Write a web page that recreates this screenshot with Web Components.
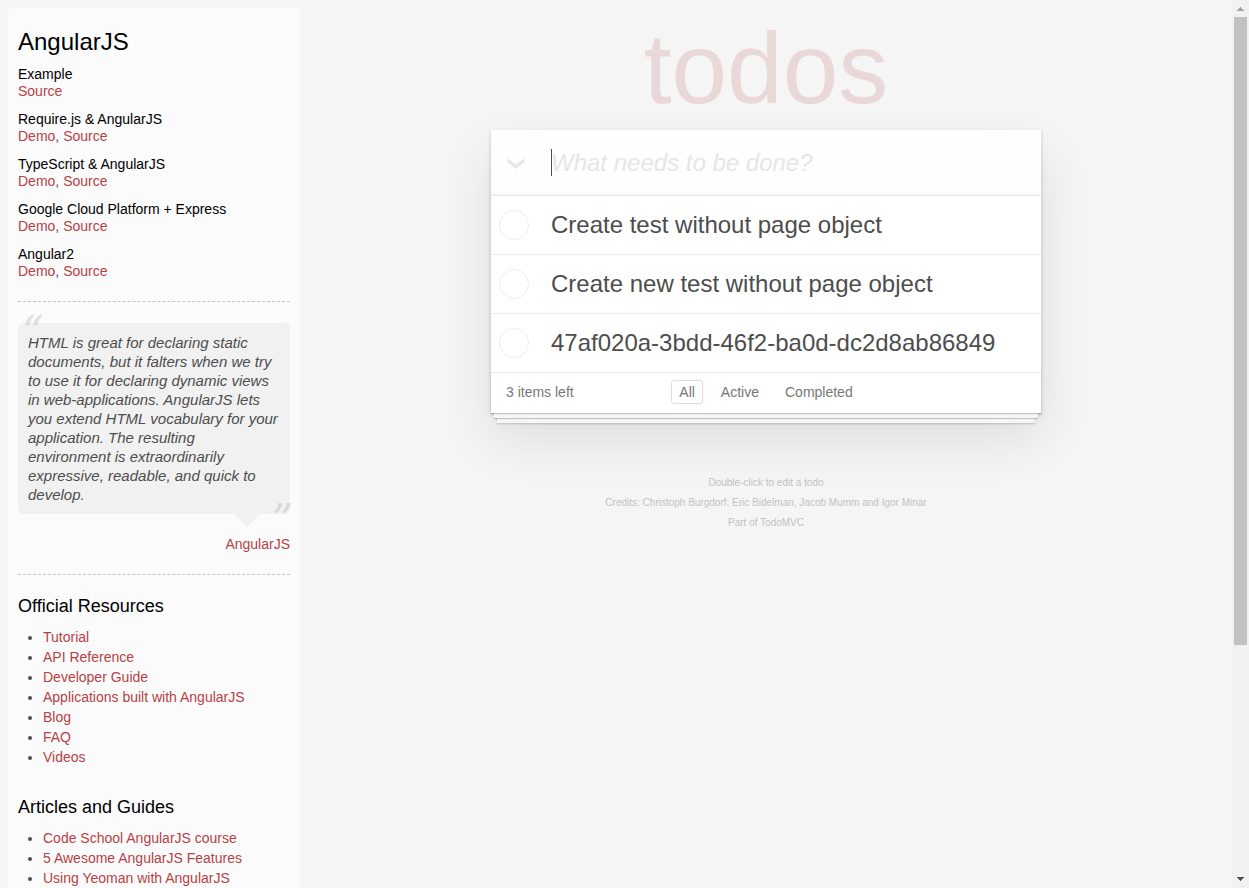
<!DOCTYPE html>
<html lang="en">
<head>
<meta charset="utf-8">
<title>AngularJS • TodoMVC</title>
<style>
html, body { margin: 0; height: 100%; }
body { background: #f5f5f5; color: #4d4d4d; font: 14px/20px "Liberation Sans", Arial, sans-serif; overflow: hidden; }
</style>
</head>
<body>
<todo-shell>
  <learn-bar slot="aside" heading="AngularJS">
    <demo-links heading="Example"><a href="#source">Source</a></demo-links>
    <demo-links heading="Require.js &amp; AngularJS"><a href="#demo">Demo</a>, <a href="#source">Source</a></demo-links>
    <demo-links heading="TypeScript &amp; AngularJS"><a href="#demo">Demo</a>, <a href="#source">Source</a></demo-links>
    <demo-links heading="Google Cloud Platform + Express"><a href="#demo">Demo</a>, <a href="#source">Source</a></demo-links>
    <demo-links heading="Angular2"><a href="#demo">Demo</a>, <a href="#source">Source</a></demo-links>
    <speech-quote slot="quote">HTML is great for declaring static documents, but it falters when we try to use it for declaring dynamic views in web-applications. AngularJS lets you extend HTML vocabulary for your application. The resulting environment is extraordinarily expressive, readable, and quick to develop.<a slot="by" href="#angularjs">AngularJS</a></speech-quote>
    <link-list slot="lists" heading="Official Resources" items="Tutorial|API Reference|Developer Guide|Applications built with AngularJS|Blog|FAQ|Videos"></link-list>
    <link-list slot="lists" heading="Articles and Guides" items="Code School AngularJS course|5 Awesome AngularJS Features|Using Yeoman with AngularJS"></link-list>
  </learn-bar>
  <todo-app>
    <todo-item>Create test without page object</todo-item>
    <todo-item>Create new test without page object</todo-item>
    <todo-item>47af020a-3bdd-46f2-ba0d-dc2d8ab86849</todo-item>
    <todo-filters slot="footer">3 items left</todo-filters>
  </todo-app>
  <page-info></page-info>
  <scroll-rail slot="rail"></scroll-rail>
</todo-shell>

<script>
const define = (name, html, setup) => customElements.define(name, class extends HTMLElement {
  constructor() {
    super();
    this.attachShadow({ mode: 'open' }).innerHTML = html;
  }
  connectedCallback() { if (setup) setup(this, this.shadowRoot); }
});

const setHeading = (host, root) => { root.querySelector('.heading').textContent = host.getAttribute('heading'); };

define('todo-shell', `
<style>
:host { display: grid; grid-template-columns: 300px minmax(0, 1fr) 17px; height: 100vh; overflow: hidden; }
.aside { padding: 8px 0 0 8px; display: flex; }
main { min-width: 0; }
</style>
<div class="aside"><slot name="aside"></slot></div>
<main><slot></slot></main>
<slot name="rail"></slot>`);

define('learn-bar', `
<style>
:host { display: block; flex: 1; box-sizing: border-box; padding: 19px 10px 0; background: rgba(255,255,255,.6); border-radius: 5px 5px 0 0; }
h3 { margin: 0 0 10px; font-size: 24px; line-height: 29px; font-weight: 500; color: #000; }
.demos { display: grid; gap: 11px; }
hr { margin: 20px 0; border: 0; border-top: 1px dashed #c5c5c5; }
hr.upper { margin: 21px 0; }
.lists { display: grid; gap: 29px; }
</style>
<h3 class="heading"></h3>
<div class="demos"><slot></slot></div>
<hr class="upper">
<slot name="quote"></slot>
<hr>
<div class="lists"><slot name="lists"></slot></div>`, setHeading);

define('demo-links', `
<style>
:host { display: block; line-height: 17px; }
h5 { margin: 0; font-size: 14px; font-weight: 500; color: #000; }
::slotted(a) { color: #b83f45; text-decoration: none; }
</style>
<h5 class="heading"></h5>
<slot></slot>`, setHeading);

define('speech-quote', `
<style>
:host { display: block; }
blockquote { position: relative; margin: 0; padding: 10px; background: rgba(0,0,0,.04); border-radius: 5px; }
p { margin: 0; font-size: 15px; line-height: 19px; font-style: italic; }
.mark { position: absolute; font: italic 42px/42px "DejaVu Serif", serif; opacity: .15; }
.open { top: -12px; left: 4px; }
.close { bottom: -27px; right: -3px; }
.tail { position: absolute; top: 100%; right: 30px; border: 13px solid transparent; border-top-color: rgba(0,0,0,.04); border-bottom: 0; }
footer { margin-top: 21px; line-height: 19px; text-align: right; }
::slotted(a) { color: #b83f45; text-decoration: none; }
</style>
<blockquote>
  <span class="mark open">“</span>
  <p><slot></slot></p>
  <span class="mark close">”</span>
  <span class="tail"></span>
</blockquote>
<footer><slot name="by"></slot></footer>`);

define('link-list', `
<style>
:host { display: block; }
h4 { margin: 0 0 10px; font-size: 18px; line-height: 22px; font-weight: 500; color: #000; }
ul { margin: 0; padding: 0 0 0 25px; }
li { line-height: 20px; }
a { color: #b83f45; text-decoration: none; }
</style>
<h4 class="heading"></h4>
<ul></ul>`, (host, root) => {
  setHeading(host, root);
  root.querySelector('ul').replaceChildren(...host.getAttribute('items').split('|').map(text => {
    const li = document.createElement('li');
    const a = document.createElement('a');
    a.href = '#' + text.toLowerCase().replace(/\W+/g, '-');
    a.textContent = text;
    li.append(a);
    return li;
  }));
});

define('todo-app', `
<style>
:host { display: block; max-width: 550px; margin: 0 auto; }
h1 { margin: 0; padding: 12px 0 6px; font-size: 100px; line-height: 112px; font-weight: 100; text-align: center; color: rgba(175,47,47,.15); }
.card { background: #fff; box-shadow: 0 2px 4px rgba(0,0,0,.2), 0 25px 50px rgba(0,0,0,.1); }
form { position: relative; display: grid; grid-template-columns: 60px 1fr; height: 65px; background: rgba(0,0,0,.003); box-shadow: inset 0 -2px 1px rgba(0,0,0,.03); }
label { display: grid; place-items: center start; padding: 3px 0 0 16px; }
label * { grid-area: 1 / 1; }
.all { appearance: none; margin: 0; width: 18px; height: 12px; }
svg { display: block; pointer-events: none; }
.new { min-width: 0; box-sizing: border-box; border: 0; outline: 0; margin: 0; padding: 0 16px 0 0; background: none; font: 24px "Liberation Sans", Arial, sans-serif; color: #4d4d4d; }
.new::placeholder { font-style: italic; color: #e6e6e6; opacity: 1; }
.caret { position: absolute; left: 60px; top: 19px; width: 1px; height: 27px; background: #4d4d4d; }
.list { border-top: 1px solid #e6e6e6; }
</style>
<h1>todos</h1>
<div class="card">
  <form>
    <label aria-label="Mark all as complete"><input class="all" type="checkbox"><svg width="18" height="12" viewBox="0 0 18 12"><path d="M0.2 0.5V3.8L7.6 9.9Q8.8 11 10 9.9L17.4 3.8V0.5L8.8 6.6Z" fill="#e6e6e6"/></svg></label>
    <input class="new" placeholder="What needs to be done?" aria-label="New todo">
    <span class="caret"></span>
  </form>
  <div class="list"><slot></slot></div>
  <slot name="footer"></slot>
</div>`);

define('todo-item', `
<style>
:host { display: block; border-bottom: 1px solid #ededed; }
:host(:nth-of-type(3)) { border-bottom: 0; }
label { display: grid; grid-template-columns: 30px 1fr; gap: 22px; align-items: center; min-height: 58px; padding: 0 15px 0 8px; font-size: 24px; line-height: 27px; }
input { appearance: none; box-sizing: border-box; margin: 0; width: 30px; height: 30px; border: 1px solid #ededed; border-radius: 50%; }
span { padding-bottom: 2px; }
</style>
<label><input type="checkbox"><span><slot></slot></span></label>`);

define('todo-filters', `
<style>
:host { position: relative; display: grid; grid-template-columns: 1fr auto 1fr; align-items: center; padding: 7px 15px 9px; border-top: 1px solid #e6e6e6; line-height: 18px; color: #777;
  box-shadow: 0 1px 1px rgba(0,0,0,.2), 0 8px 0 -3px #f6f6f6, 0 9px 1px -3px rgba(0,0,0,.2), 0 16px 0 -6px #f6f6f6, 0 17px 2px -6px rgba(0,0,0,.2); }
nav { display: flex; gap: 10px; }
a { padding: 2px 7px; border: 1px solid transparent; border-radius: 3px; color: inherit; text-decoration: none; }
a.selected { border-color: rgba(175,47,47,.2); }
</style>
<span><slot></slot></span>
<nav><a class="selected" href="#/">All</a><a href="#/active">Active</a><a href="#/completed">Completed</a></nav>`);

define('page-info', `
<style>
:host { display: block; margin-top: 60px; text-align: center; font-size: 10px; line-height: 20px; color: #bfbfbf; text-shadow: 0 1px 0 rgba(255,255,255,.5); }
p { margin: 0; }
a { color: inherit; text-decoration: none; }
</style>
<p>Double-click to edit a todo</p>
<p>Credits: <a href="#burgdorf">Christoph Burgdorf</a>, <a href="#bidelman">Eric Bidelman</a>, <a href="#mumm">Jacob Mumm</a> and <a href="#minar">Igor Minar</a></p>
<p>Part of <a href="#todomvc">TodoMVC</a></p>`);

define('scroll-rail', `
<style>
:host { display: grid; grid-template-rows: 17px 1fr 17px; background: #f1f1f1; }
.track { display: grid; grid-template-rows: 628fr 226fr; padding: 0 2px; }
.thumb { background: #c1c1c1; }
svg { display: block; }
</style>
<svg width="17" height="17" viewBox="0 0 17 17" shape-rendering="crispEdges"><path d="M8 7h1v1h1v1h1v1h1v1H5v-1h1V9h1V8h1z" fill="#a3a3a3"/></svg>
<div class="track"><div class="thumb"></div></div>
<svg width="17" height="17" viewBox="0 0 17 17" shape-rendering="crispEdges"><path d="M5 6h7v1h-1v1h-1v1H9v1H8V9H7V8H6V7H5z" fill="#505050"/></svg>`);
</script>
</body>
</html>
